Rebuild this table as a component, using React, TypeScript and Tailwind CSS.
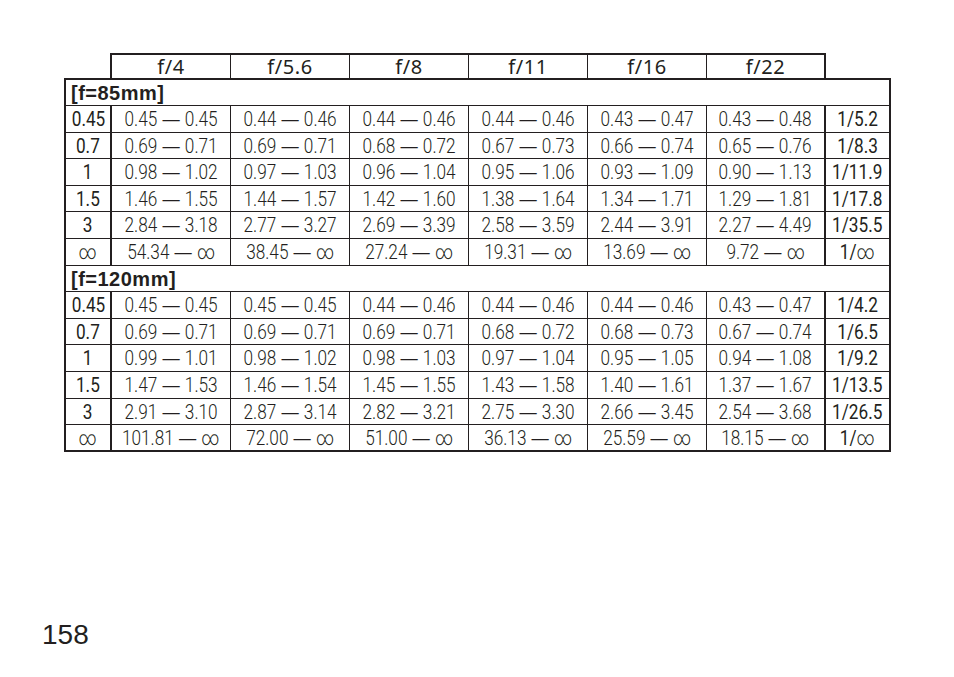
import React from "react";

type Row = [string, string[], string];

const s85: Row[] = [
  ["0.45", ["0.45 — 0.45", "0.44 — 0.46", "0.44 — 0.46", "0.44 — 0.46", "0.43 — 0.47", "0.43 — 0.48"], "1/5.2"],
  ["0.7", ["0.69 — 0.71", "0.69 — 0.71", "0.68 — 0.72", "0.67 — 0.73", "0.66 — 0.74", "0.65 — 0.76"], "1/8.3"],
  ["1", ["0.98 — 1.02", "0.97 — 1.03", "0.96 — 1.04", "0.95 — 1.06", "0.93 — 1.09", "0.90 — 1.13"], "1/11.9"],
  ["1.5", ["1.46 — 1.55", "1.44 — 1.57", "1.42 — 1.60", "1.38 — 1.64", "1.34 — 1.71", "1.29 — 1.81"], "1/17.8"],
  ["3", ["2.84 — 3.18", "2.77 — 3.27", "2.69 — 3.39", "2.58 — 3.59", "2.44 — 3.91", "2.27 — 4.49"], "1/35.5"],
  ["∞", ["54.34 — ∞", "38.45 — ∞", "27.24 — ∞", "19.31 — ∞", "13.69 — ∞", "9.72 — ∞"], "1/∞"],
];

const s120: Row[] = [
  ["0.45", ["0.45 — 0.45", "0.45 — 0.45", "0.44 — 0.46", "0.44 — 0.46", "0.44 — 0.46", "0.43 — 0.47"], "1/4.2"],
  ["0.7", ["0.69 — 0.71", "0.69 — 0.71", "0.69 — 0.71", "0.68 — 0.72", "0.68 — 0.73", "0.67 — 0.74"], "1/6.5"],
  ["1", ["0.99 — 1.01", "0.98 — 1.02", "0.98 — 1.03", "0.97 — 1.04", "0.95 — 1.05", "0.94 — 1.08"], "1/9.2"],
  ["1.5", ["1.47 — 1.53", "1.46 — 1.54", "1.45 — 1.55", "1.43 — 1.58", "1.40 — 1.61", "1.37 — 1.67"], "1/13.5"],
  ["3", ["2.91 — 3.10", "2.87 — 3.14", "2.82 — 3.21", "2.75 — 3.30", "2.66 — 3.45", "2.54 — 3.68"], "1/26.5"],
  ["∞", ["101.81 — ∞", "72.00 — ∞", "51.00 — ∞", "36.13 — ∞", "25.59 — ∞", "18.15 — ∞"], "1/∞"],
];

function Inf() {
  return <span className="font-['Roboto',sans-serif] font-light text-[20px] leading-[20px]">∞</span>;
}

function Val({ v }: { v: string }) {
  const [a, b] = v.split(" — ");
  return (
    <span className="inline-flex items-baseline scale-x-[0.86] whitespace-nowrap leading-[20px]">
      <span>{a}</span>
      <span className="font-['Liberation_Sans',sans-serif] font-normal mx-[6px]">—</span>
      <span>{b === "∞" ? <Inf /> : b}</span>
    </span>
  );
}

function DataRow({ row, h, last }: { row: Row; h: string; last?: boolean }) {
  const [d, vals, m] = row;
  return (
    <div className={`flex ${h} ${last ? "" : "border-b border-[#231f20]"}`}>
      <div className="w-[46px] shrink-0 flex items-center justify-center border-r-2 border-[#231f20] text-[20px] leading-[20px] font-normal font-['Roboto',sans-serif]">
        <span className="inline-block scale-x-[0.86] whitespace-nowrap">{d === "∞" ? <Inf /> : d}</span>
      </div>
      {vals.map((v, i) => (
        <div
          key={i}
          className={`w-[119px] shrink-0 flex items-center justify-center text-[20px] font-light text-[#231f20] font-['Roboto',sans-serif] ${
            i === 5 ? "border-r-2" : "border-r"
          } border-[#231f20]`}
        >
          <Val v={v} />
        </div>
      ))}
      <div className="flex-1 flex items-center justify-center text-[20px] leading-[20px] font-normal font-['Roboto',sans-serif]">
        <span className="inline-block scale-x-[0.86] whitespace-nowrap">
          {m === "1/∞" ? (
            <>
              1/<Inf />
            </>
          ) : (
            m
          )}
        </span>
      </div>
    </div>
  );
}

function Section({ title, rows, first }: { title: string; rows: Row[]; first?: boolean }) {
  const hs = first
    ? ["h-[27px]", "h-[26px]", "h-[27px]", "h-[26px]", "h-[27px]", "h-[27px]"]
    : ["h-[27px]", "h-[26px]", "h-[27px]", "h-[27px]", "h-[26px]", "h-[25px]"];
  return (
    <>
      <div className="h-[26px] flex items-center pl-[5px] border-b border-[#231f20] text-[20px] font-bold tracking-[0.5px] font-['Liberation_Sans',sans-serif]">
        {title}
      </div>
      {rows.map((r, i) => (
        <DataRow key={i} row={r} h={hs[i]} last={!first && i === rows.length - 1} />
      ))}
    </>
  );
}

export default function App() {
  const heads = ["f/4", "f/5.6", "f/8", "f/11", "f/16", "f/22"];
  return (
    <div className="w-[954px] h-[677px] bg-white text-[#231f20] pt-[53px]">
      <div className="ml-[64px] w-[827px]">
        <div className="flex h-[25px]">
          <div className="w-[46px] shrink-0" />
          {heads.map((h, i) => (
            <div
              key={h}
              className={`${i === 0 ? "w-[121px] border-l-2" : "w-[119px]"} ${
                i === 5 ? "border-r-2" : "border-r"
              } shrink-0 border-t-2 border-[#231f20] flex items-center justify-center text-[20px] tracking-[0.6px] font-['Noto_Sans',sans-serif] pt-[1px]`}
            >
              {h}
            </div>
          ))}
        </div>
        <div className="border-2 border-[#231f20]">
          <Section title="[f=85mm]" rows={s85} first />
          <Section title="[f=120mm]" rows={s120} />
        </div>
      </div>
      <div className="ml-[42px] mt-[169px] h-[30px] leading-none text-[28px] font-['Liberation_Sans',sans-serif] text-[#231f20]">
        158
      </div>
    </div>
  );
}
